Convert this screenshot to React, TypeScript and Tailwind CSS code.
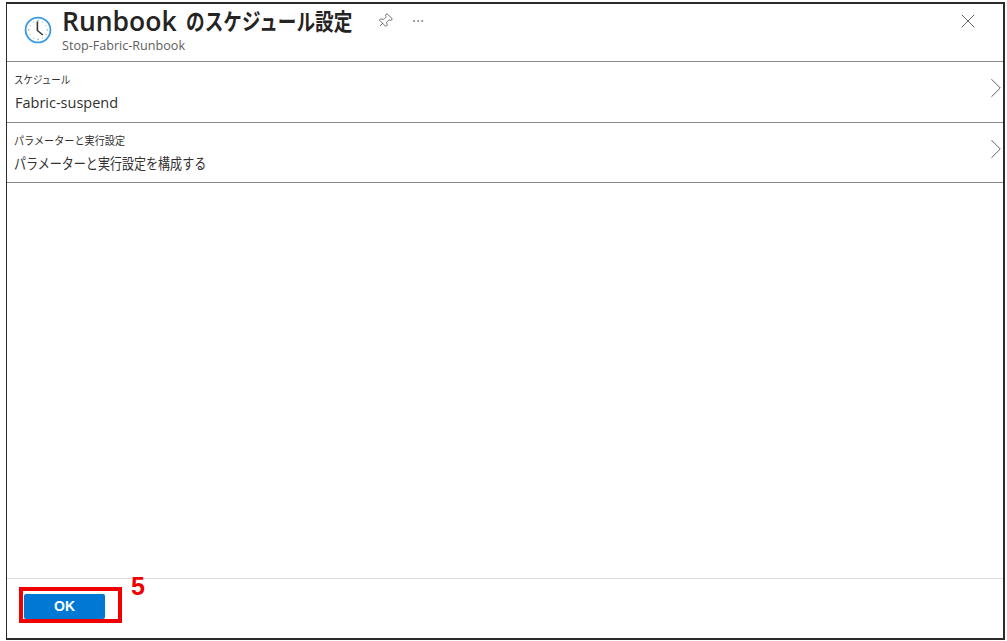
import { Pin, MoreHorizontal, X, ChevronRight } from 'lucide-react';

const font = { fontFamily: '"Open Sans", "Noto Sans CJK JP", sans-serif' };
const arial = { fontFamily: '"Liberation Sans", sans-serif' };

const ClockIcon = () => (
  <svg width="28" height="28" viewBox="0 0 28 28" fill="none">
    <circle cx="14" cy="14" r="12.4" fill="#fff" stroke="#3b9ae1" strokeWidth="1.8" />
    <g fill="#8f8f8f">
      <circle cx="14" cy="4.8" r="0.7" />
      <circle cx="14" cy="23.2" r="0.7" />
      <circle cx="4.8" cy="14" r="0.7" />
      <circle cx="23.2" cy="14" r="0.7" />
      <circle cx="9.4" cy="6" r="0.5" />
      <circle cx="18.6" cy="6" r="0.5" />
      <circle cx="6" cy="9.4" r="0.5" />
      <circle cx="22" cy="9.4" r="0.5" />
      <circle cx="6" cy="18.6" r="0.5" />
      <circle cx="22" cy="18.6" r="0.5" />
      <circle cx="9.4" cy="22" r="0.5" />
      <circle cx="18.6" cy="22" r="0.5" />
    </g>
    <path d="M13.4 5.5V14.5L18.8 19" stroke="#3a3a3a" strokeWidth="1.6" />
  </svg>
);

// reference font is narrower than Noto CJK, so squeeze the japanese text
const Narrow = ({ text, className }: { text: string; className: string }) => (
  <span className={`inline-block origin-left whitespace-nowrap ${className}`}>{text}</span>
);

const Row = ({ label, value, h }: { label: React.ReactNode; value: React.ReactNode; h: string }) => (
  <div className={`flex shrink-0 justify-between border-b border-[#8a8a8a] pl-[7px] ${h}`}>
    <div className="pt-[11px]">
      <div className="h-[14px] text-[11px] leading-[14px] text-[#323130]">{label}</div>
      <div className="mt-[5px] h-[22px] text-[14.5px] leading-[22px] text-[#323130]">{value}</div>
    </div>
    <ChevronRight className="-mr-[10px] mt-[9px] h-[34px] w-[34px] text-[#605e5c]" strokeWidth={0.7} />
  </div>
);

export default function App() {
  return (
    <div className="h-[641px] w-[1007px] bg-white pb-[1px] pl-[6px] pr-[2px] pt-[2px]" style={font}>
      <div className="flex h-full flex-col overflow-hidden border-2 border-l-[1.5px] border-[#2b2b2b]">
        <div className="flex h-[58px] shrink-0 border-b border-[#8a8a8a]">
          <div className="ml-[17px] mt-[12px]">
            <ClockIcon />
          </div>
          <div className="ml-[10px] mt-[2px]">
            <div className="flex h-[30px] items-center">
              <span className="w-[115px] text-[26.5px] font-semibold leading-[30px] text-[#252423]">Runbook</span>
              <div className="ml-[9px] w-[168px]">
                <Narrow text="のスケジュール設定" className="scale-x-[0.81] text-[23px] font-semibold leading-[30px] text-[#252423]" />
              </div>
              <Pin className="ml-[23px] h-[16px] w-[16px] rotate-45 text-[#444]" strokeWidth={1.1} />
              <MoreHorizontal className="ml-[18px] h-[14px] w-[14px] text-[#555]" strokeWidth={1} />
            </div>
            <div className="mt-[3px] text-[12.6px] leading-[14px] text-[#605e5c]">Stop-Fabric-Runbook</div>
          </div>
          <X className="ml-auto mr-[23px] mt-[5px] h-[24px] w-[24px] text-[#555]" strokeWidth={0.9} />
        </div>
        <Row
          h="h-[61px]"
          label={<Narrow text="スケジュール" className="scale-x-[0.86]" />}
          value={<span className="ml-[1px]">Fabric-suspend</span>}
        />
        <Row
          h="h-[60px]"
          label={<Narrow text="パラメーターと実行設定" className="scale-x-[0.92]" />}
          value={<Narrow text="パラメーターと実行設定を構成する" className="scale-x-[0.83]" />}
        />
        <div className="flex-1" />
        <div className="flex h-[60px] shrink-0 border-t border-[#dcdcdc] pl-[12px] pt-[8px]" style={arial}>
          <div className="h-[36px] w-[103px] border-[4px] border-[#f00000] pl-[1px] pt-[3px]">
            <button className="h-[25px] w-[81px] rounded-[2px] bg-[#0078d4] text-[14px] font-bold text-white">OK</button>
          </div>
          <span className="-mt-[16px] ml-[9px] text-[25px] font-bold leading-[30px] text-[#f00000]">5</span>
        </div>
      </div>
    </div>
  );
}
